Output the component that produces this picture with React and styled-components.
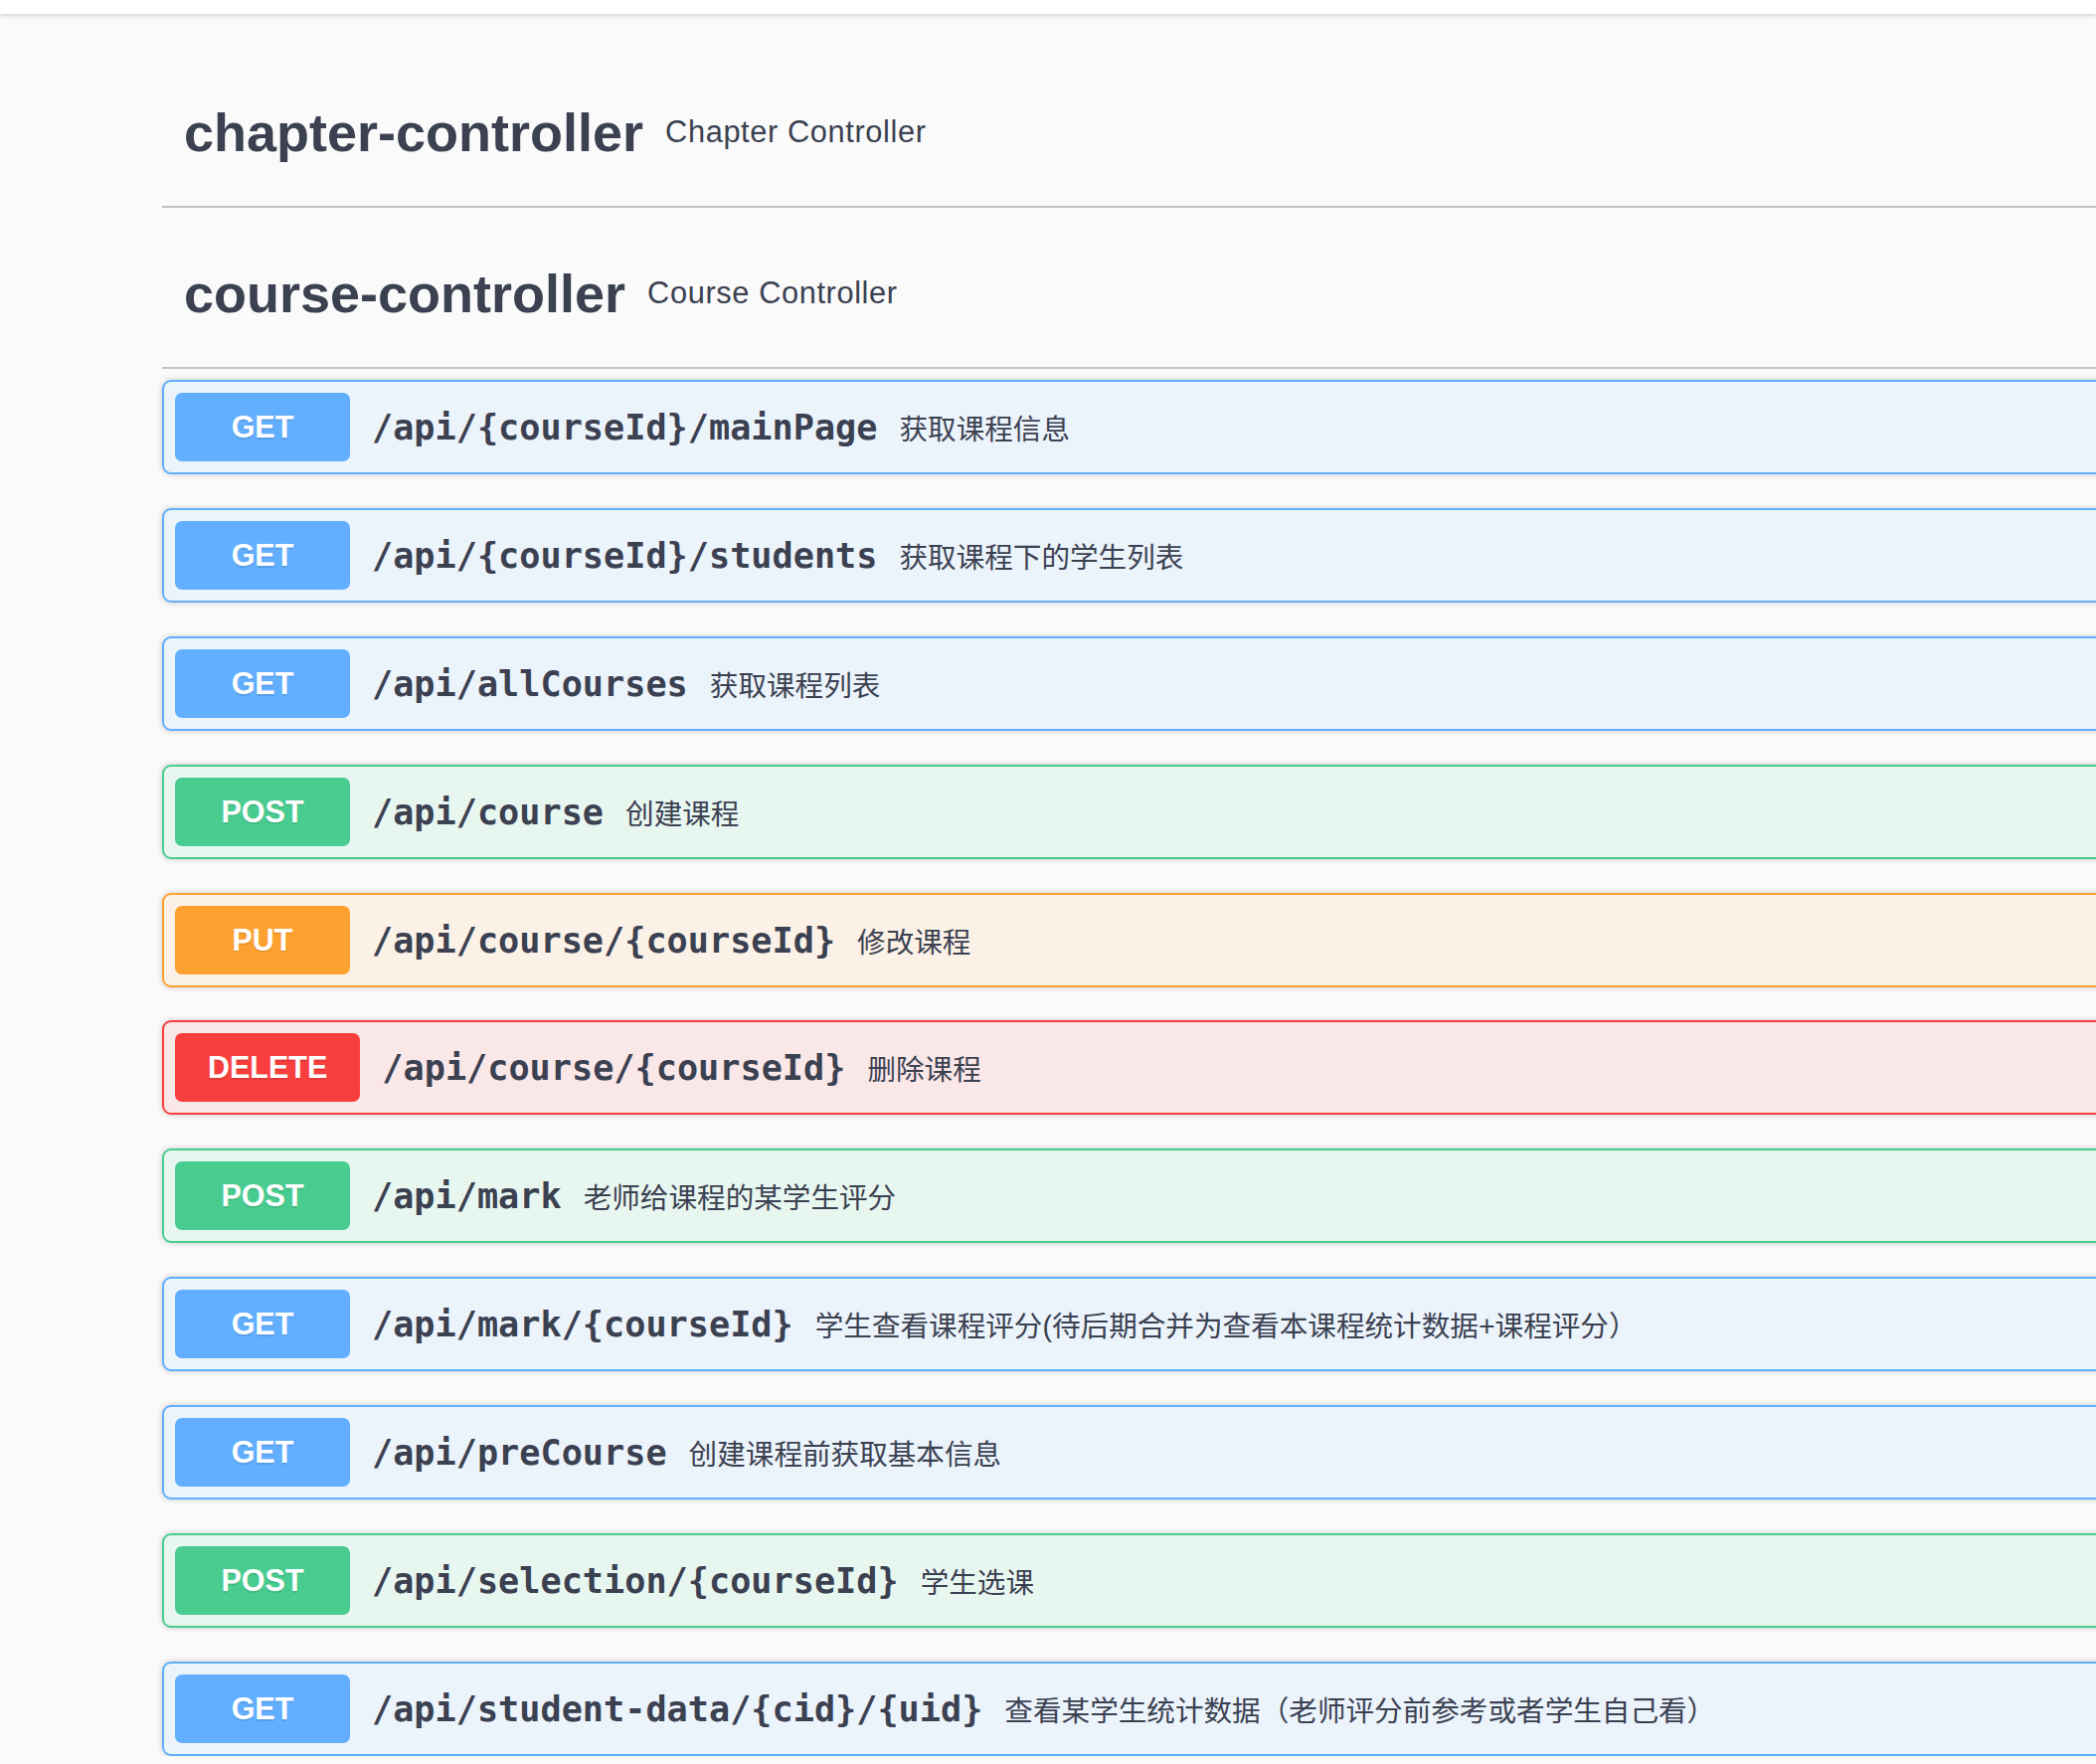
import styled, { createGlobalStyle } from "styled-components";

const GlobalStyle = createGlobalStyle`
  html, body {
    margin: 0;
    padding: 0;
    background: #fafafa;
    overflow-x: hidden;
  }
  * { box-sizing: border-box; }
`;

const methods = {
  GET: { main: "#61affe", light: "#ebf3fb" },
  POST: { main: "#49cc90", light: "#e8f6f0" },
  PUT: { main: "#fca130", light: "#fbf1e6" },
  DELETE: { main: "#f93e3e", light: "#fae7e7" },
};

const ops = [
  { m: "GET", path: "/api/{courseId}/mainPage", desc: "获取课程信息" },
  { m: "GET", path: "/api/{courseId}/students", desc: "获取课程下的学生列表" },
  { m: "GET", path: "/api/allCourses", desc: "获取课程列表" },
  { m: "POST", path: "/api/course", desc: "创建课程" },
  { m: "PUT", path: "/api/course/{courseId}", desc: "修改课程" },
  { m: "DELETE", path: "/api/course/{courseId}", desc: "删除课程" },
  { m: "POST", path: "/api/mark", desc: "老师给课程的某学生评分" },
  { m: "GET", path: "/api/mark/{courseId}", desc: "学生查看课程评分(待后期合并为查看本课程统计数据+课程评分）" },
  { m: "GET", path: "/api/preCourse", desc: "创建课程前获取基本信息" },
  { m: "POST", path: "/api/selection/{courseId}", desc: "学生选课" },
  { m: "GET", path: "/api/student-data/{cid}/{uid}", desc: "查看某学生统计数据（老师评分前参考或者学生自己看）" },
];

export default function App() {
  return (
    <>
      <GlobalStyle />
      <TopBar />
      <Wrapper>
        <TagHeader>
          <TagName>chapter-controller</TagName>
          <TagDesc>Chapter Controller</TagDesc>
        </TagHeader>
        <TagHeader>
          <TagName>course-controller</TagName>
          <TagDesc>Course Controller</TagDesc>
        </TagHeader>
        <OpList>
          {ops.map((o, i) => (
            <OpBlock key={i} $c={methods[o.m]}>
              <Method $c={methods[o.m]}>{o.m}</Method>
              <Path>{o.path}</Path>
              <Desc>{o.desc}</Desc>
            </OpBlock>
          ))}
        </OpList>
      </Wrapper>
    </>
  );
}

const TopBar = styled.div`
  height: 14px;
  background: #fff;
  box-shadow: 0 2px 4px 0 rgba(0, 0, 0, 0.15);
`;

const Wrapper = styled.div`
  padding: 44px 0 0 163px;
  margin-right: -40px;
`;

const TagHeader = styled.div`
  display: flex;
  align-items: center;
  height: 151px;
  padding: 0 44px 0 22px;
  margin-bottom: 11px;
  border-bottom: 2px solid rgba(59, 65, 81, 0.3);
  color: #3b4151;
`;

const TagName = styled.span`
  font-family: "Liberation Sans", Arial, sans-serif;
  font-weight: 700;
  font-size: 54px;
`;

const TagDesc = styled.span`
  font-family: "Liberation Sans", Arial, sans-serif;
  font-size: 30.8px;
  letter-spacing: 0.6px;
  padding-left: 22px;
`;

const OpList = styled.div`
  display: flex;
  flex-direction: column;
  gap: 33.9px;
`;

const OpBlock = styled.div`
  display: flex;
  align-items: center;
  height: 95px;
  padding: 0 11px;
  border: 2px solid ${(p) => p.$c.main};
  border-radius: 9px;
  background: ${(p) => p.$c.light};
  box-shadow: 0 0 6px rgba(0, 0, 0, 0.19);
`;

const Method = styled.div`
  display: flex;
  align-items: center;
  justify-content: center;
  min-width: 176px;
  height: 69px;
  padding: 0 33px;
  border-radius: 7px;
  background: ${(p) => p.$c.main};
  color: #fff;
  font-family: "Liberation Sans", Arial, sans-serif;
  font-weight: 700;
  font-size: 30.5px;
  text-shadow: 0 2px 0 rgba(0, 0, 0, 0.1);
`;

const Path = styled.span`
  padding: 0 22px;
  font-family: "DejaVu Sans Mono", monospace;
  font-weight: 700;
  font-size: 35.2px;
  color: #3b4151;
`;

const Desc = styled.span`
  font-family: "Liberation Sans", "Noto Sans CJK SC", sans-serif;
  font-size: 28.6px;
  color: #3b4151;
`;
